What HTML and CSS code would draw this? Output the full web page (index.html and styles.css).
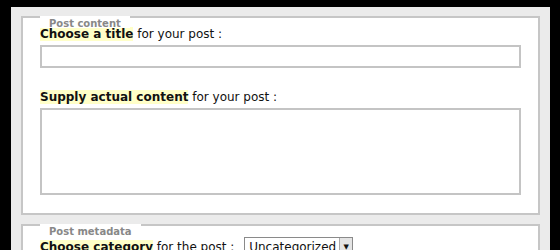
FILE: index.html
```html
<!DOCTYPE html>
<html lang="en">

<head>
    <meta charset="UTF-8">
    <title>New post</title>
    <link rel="stylesheet" href="styles.css">
</head>

<body>
    <div class="panel">
        <!-- contenu du post -->
        <div class="fieldset">
            <div class="legend">Post content</div>
            <p class="label label-first"><span class="mark">Choose a title</span> for your post :</p>
            <div class="field"></div>
            <p class="label"><span class="mark">Supply actual content</span> for your post :</p>
            <div class="area"></div>
        </div>

        <!-- metadonnees -->
        <div class="fieldset">
            <div class="legend">Post metadata</div>
            <p class="label label-meta"><span class="mark">Choose category</span> for the post :
                <span class="select">Uncategorized<span class="arrow">&#9660;</span></span>
            </p>
        </div>
    </div>
</body>

</html>
```

FILE: styles.css
```css
body {
    background-color: #000;
    font-family: "DejaVu Sans", Verdana, sans-serif;
    margin: 0;
    padding: 0;
}

.panel {
    background-color: #ebebeb;
    margin: 7px 10px 0 11px;
    padding: 9px 10px 20px 10px;
}

.fieldset {
    background-color: #fff;
    border: 2px solid #c6c6c6;
    padding: 0 17px 18px 17px;
    margin-bottom: 9px;
}

.legend {
    position: relative; /* passe au-dessus du texte */
    z-index: 1;
    width: fit-content;
    background-color: #fff;
    color: #888;
    font-size: 10px;
    font-weight: bold;
    line-height: 11px;
    height: 10px;
    padding: 2px 9px 0 9px;
    margin-top: -2px;
}

.label {
    font-size: 12px;
    color: #111;
    margin: 0;
    line-height: 18px;
    padding-top: 20px;
}

.label-first {
    margin-top: -3px;
    padding-top: 0;
}

.label-meta {
    margin-top: 1px;
    padding-top: 0;
}

.mark {
    background-color: #ffffc8;
    font-weight: bold;
}

.field {
    border: 2px solid #c4c4c4;
    height: 19px;
    margin-top: 2px;
}

.area {
    border: 2px solid #c4c4c4;
    height: 83px;
    margin-top: 2px;
}

.select {
    display: inline-block;
    border: 1px solid #8a8a8a;
    padding: 0 0 0 4px;
    margin-left: 6px;
    font-size: 12px;
    line-height: 18px;
}

.arrow {
    display: inline-block;
    border-left: 1px solid #aaa;
    background-color: #e4e4e4;
    font-size: 7px;
    width: 12px;
    text-align: center;
    margin-left: 3px;
    vertical-align: top;
}
```
